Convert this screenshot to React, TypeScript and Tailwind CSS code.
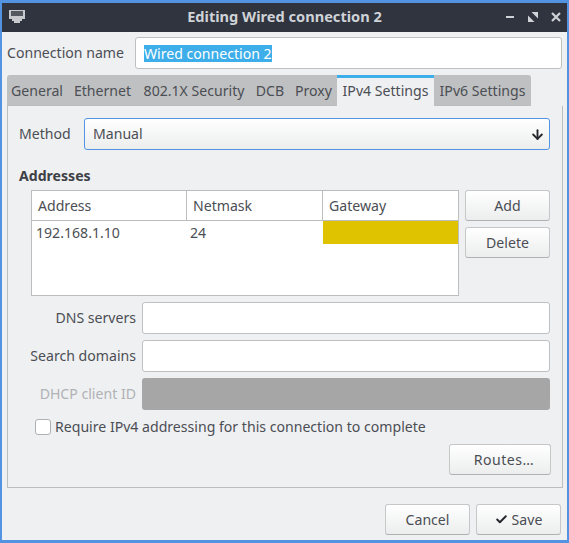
import { ArrowDown, Check } from 'lucide-react';

const FONT = "font-['Noto_Sans',sans-serif]";

const tabs = [
    { label: 'General', width: 'w-[60px]' },
    { label: 'Ethernet', width: 'w-[71px]' },
    { label: '802.1X Security', width: 'w-[112px]' },
    { label: 'DCB', width: 'w-[40px]' },
    { label: 'Proxy', width: 'w-[47px]' },
];

function Button({ className = '', children }: { className?: string; children: React.ReactNode }) {
    return (
        <button
            type="button"
            className={`flex h-[31px] items-center justify-center rounded-[3px] border border-[#c6c7c9] border-b-[#b0b1b3] bg-gradient-to-b from-white to-[#eceded] text-[14.1px] text-[#4b4e54] ${className}`}
        >
            {children}
        </button>
    );
}

function Field({ label, disabled = false }: { label: string; disabled?: boolean }) {
    return (
        <div className="flex h-8 items-center">
            <span className={`w-[123px] pr-[6px] text-right text-[14.1px] whitespace-nowrap ${disabled ? 'text-[#b0b2b5]' : 'text-[#4b4e54]'}`}>
                {label}
            </span>
            {disabled ? (
                <div className="h-8 w-[408px] rounded-[3px] bg-[#a6a6a6]" />
            ) : (
                <div className="h-8 w-[408px] rounded-[3px] border border-[#bfc0c2] bg-white" />
            )}
        </div>
    );
}

export default function App() {
    return (
        <div className={`flex h-[543px] w-[569px] flex-col overflow-hidden border-x-2 border-y-[3px] border-[#5294e2] bg-[#eff0f2] ${FONT}`}>
            {/* Title bar */}
            <div className="relative flex h-[29px] shrink-0 items-center justify-center bg-[#2f343f] pb-[2px]">
                <svg className="absolute top-[7px] left-[7px]" width="16" height="13" viewBox="0 0 16 13">
                    <path d="M0 0h16v9h-3v2h-2v2H5v-2H3V9H0z" fill="#c8c9cc" />
                    <path d="M2 1h12v5H2z" fill="#55585f" />
                </svg>
                <span className="text-[14.6px] font-bold text-[#cfd2d7]">Editing Wired connection 2</span>
                <div className="absolute top-0 right-[6px] flex h-full items-center gap-[13px] pb-[2px]">
                    <svg width="10" height="10" viewBox="0 0 10 10"><path d="M1 4h8v2H1z" fill="#cfd2d7" /></svg>
                    <svg width="10" height="10" viewBox="0 0 10 10"><path d="M3.5 0H10v6.5zM0 3.5V10h6.5z" fill="#cfd2d7" /></svg>
                    <svg width="10" height="10" viewBox="0 0 10 10"><path d="M1 1l8 8M9 1l-8 8" stroke="#cfd2d7" strokeWidth="2.2" /></svg>
                </div>
            </div>

            <div className="flex flex-1 flex-col pt-[5px] pl-[5px]">
                {/* Connection name */}
                <div className="flex h-8 items-center">
                    <span className="w-[128px] text-[14.1px] text-[#4b4e54]">Connection name</span>
                    <div className="flex h-8 w-[427px] items-center rounded-[3px] border border-[#bfc0c2] bg-white pl-2">
                        <span className="bg-[#3daee9] text-[14.1px] leading-[17px] text-white">Wired connection 2</span>
                    </div>
                </div>

                {/* Tabs */}
                <div className="mt-[6px] flex h-[31px] items-stretch">
                    <div className="flex rounded-tl-[3px] border-b border-[#bcbdbf] bg-[#bfc0c1]">
                        {tabs.map((tab) => (
                            <span key={tab.label} className={`flex items-center justify-center pt-px text-[14.1px] text-[#4b4e54] ${tab.width}`}>
                                {tab.label}
                            </span>
                        ))}
                    </div>
                    <span className="z-10 -mb-px flex w-[97px] items-center justify-center border-t-[3px] border-[#3daee9] bg-[#eff0f2] pb-[3px] text-[14.1px] text-[#4b4e54]">
                        IPv4 Settings
                    </span>
                    <span className="flex w-[97px] items-center justify-center rounded-tr-[3px] border-b border-[#bcbdbf] bg-[#bfc0c1] pt-px text-[14.1px] text-[#4b4e54]">
                        IPv6 Settings
                    </span>
                </div>

                {/* IPv4 panel */}
                <div className="flex h-[382px] w-[556px] flex-col border border-t-0 border-[#bcbdbf] pt-3 pl-[11px]">
                    <div className="flex h-8 items-center">
                        <span className="w-[65px] text-[14.1px] text-[#4b4e54]">Method</span>
                        <div className="flex h-8 w-[466px] items-center justify-between rounded-[3px] border border-[#5294e2] bg-gradient-to-b from-white to-[#eceded] pr-1 pl-2 text-[14.1px] text-[#4b4e54]">
                            Manual
                            <ArrowDown size={15} strokeWidth={3} color="#23262b" />
                        </div>
                    </div>

                    <div className="mt-4 text-[14.1px] leading-5 font-bold text-[#3d4046]">Addresses</div>

                    <div className="mt-1 ml-3 flex gap-[6px]">
                        <div className="flex h-[106px] w-[428px] flex-col border border-[#bcbdbf] bg-white">
                            <div className="flex h-[30px] shrink-0 border-b border-[#bcbdbf] text-[14.1px] text-[#4b4e54]">
                                <span className="flex w-[155px] items-center border-r border-[#bcbdbf] pl-[6px]">Address</span>
                                <span className="flex w-[136px] items-center border-r border-[#bcbdbf] pl-[6px]">Netmask</span>
                                <span className="flex flex-1 items-center pl-[6px]">Gateway</span>
                            </div>
                            <div className="flex h-[23px] text-[14.1px] text-[#4b4e54]">
                                <span className="flex w-[155px] items-center pl-1">192.168.1.10</span>
                                <span className="flex w-[136px] items-center pl-[3px]">24</span>
                                <span className="flex-1 bg-[#dfc200]" />
                            </div>
                        </div>
                        <div className="flex flex-col gap-[6px]">
                            <Button className="w-[85px]">Add</Button>
                            <Button className="w-[85px]">Delete</Button>
                        </div>
                    </div>

                    <div className="mt-[6px] flex flex-col gap-[6px]">
                        <Field label="DNS servers" />
                        <Field label="Search domains" />
                        <Field label="DHCP client ID" disabled />
                    </div>

                    <div className="mt-[9px] ml-4 flex h-[16px] items-center gap-[4px]">
                        <div className="size-4 rounded-[3px] border border-[#b0b1b3] bg-white" />
                        <span className="text-[14.1px] whitespace-nowrap text-[#4b4e54]">Require IPv4 addressing for this connection to complete</span>
                    </div>

                    <div className="mt-[9px] flex justify-end pr-[11px]">
                        <Button className="w-[102px] pl-2 tracking-[0.5px]">Routes…</Button>
                    </div>
                </div>

                {/* Dialog actions */}
                <div className="mt-4 flex justify-end gap-[6px] pr-[6px]">
                    <Button className="w-[85px]">Cancel</Button>
                    <Button className="w-[85px] gap-1">
                        <Check size={13} strokeWidth={3.5} color="#23262b" />
                        Save
                    </Button>
                </div>
            </div>
        </div>
    );
}
